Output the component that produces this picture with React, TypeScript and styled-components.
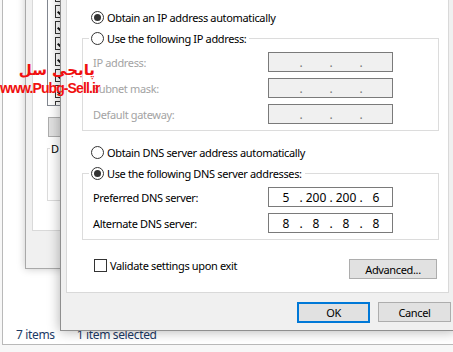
import styled, { createGlobalStyle } from "styled-components";

const GlobalStyle = createGlobalStyle`
  html, body { margin: 0; padding: 0; background: #f7f7f7; }
  body {
    font-family: "Noto Sans", "Liberation Sans", sans-serif;
    font-size: 11px;
    letter-spacing: -0.35px;
    color: #000;
  }
`;

const Desktop = styled.div`
  position: relative;
  width: 453px;
  height: 352px;
  overflow: hidden;
  background: #f7f7f7;
`;

/* explorer window at the back */
const Explorer = styled.div`
  position: absolute;
  left: 2px;
  top: -20px;
  width: 600px;
  height: 365px;
  box-sizing: border-box;
  background: #fff;
  border: 1px solid #b9b9b9;
  display: flex;
  flex-direction: column;
`;

const ExplorerBody = styled.div`
  flex: 1;
`;

const StatusBar = styled.div`
  height: 20px;
  display: flex;
  align-items: center;
  gap: 22px;
  padding-left: 13px;
  font-size: 12px;
  color: #1c3a66;
`;

/* network adapter properties behind */
const BackDialog = styled.div`
  position: absolute;
  left: 25px;
  top: -40px;
  width: 320px;
  height: 309px;
  box-sizing: border-box;
  background: #f0f0f0;
  border: 1px solid #a9a9a9;
  box-shadow: 0 0 8px rgba(0, 0, 0, 0.22);
  padding-left: 6px;
`;

const BackPanel = styled.div`
  height: 270px;
  box-sizing: border-box;
  background: #fff;
  border: 1px solid #d9d9d9;
  border-top: none;
  padding-left: 14px;
  display: flex;
  flex-direction: column;
  align-items: flex-start;
`;

const ItemList = styled.div`
  width: 240px;
  height: 145px;
  box-sizing: border-box;
  border: 1px solid #828790;
  border-top: none;
  padding: 10px 0 0 7px;
  overflow: hidden;
`;

const ListItem = styled.div`
  height: 16px;
  display: flex;
  align-items: center;
`;

const MiniCheck = styled.span`
  position: relative;
  width: 13px;
  height: 13px;
  box-sizing: border-box;
  border: 1px solid #333;

  &::after {
    content: "";
    position: absolute;
    left: 3px;
    top: 1px;
    width: 3px;
    height: 6px;
    border: solid #111;
    border-width: 0 2px 2px 0;
    transform: rotate(40deg);
  }
`;

const BackButton = styled.div`
  margin: 11px 0 0 1px;
  width: 80px;
  height: 20px;
  box-sizing: border-box;
  background: #e1e1e1;
  border: 1px solid #adadad;
`;

const DescGroup = styled.fieldset`
  margin: 4px 0 0 0;
  padding: 0 0 0 2px;
  width: 230px;
  height: 60px;
  box-sizing: border-box;
  border: 1px solid #dcdcdc;
  legend {
    padding: 0 1px;
  }
`;

/* IPv4 properties in front */
const FrontDialog = styled.div`
  position: absolute;
  left: 60px;
  top: -10px;
  width: 396px;
  height: 341px;
  box-sizing: border-box;
  background: #f0f0f0;
  border: 1px solid #8f8f8f;
  box-shadow: 0 0 12px rgba(0, 0, 0, 0.32);
  display: flex;
  flex-direction: column;
`;

const Panel = styled.div`
  flex: 1;
  margin: 0 6px 0 5px;
  padding-top: 15px;
  box-sizing: border-box;
  background: #fff;
  border: 1px solid #d9d9d9;
  display: flex;
  flex-direction: column;
`;

const RadioRow = styled.label<{ $top?: number }>`
  height: 20px;
  margin-top: ${p => p.$top ?? 0}px;
  padding-left: 24px;
  display: flex;
  align-items: center;
  gap: 3px;
`;

const RadioInline = styled.span`
  height: 20px;
  display: inline-flex;
  align-items: center;
  gap: 3px;
  color: #000;
`;

const Radio = styled.span<{ $on: boolean }>`
  width: 13px;
  height: 13px;
  box-sizing: border-box;
  flex-shrink: 0;
  border: 1px solid #333;
  border-radius: 50%;
  background: #fff;
  display: inline-flex;
  align-items: center;
  justify-content: center;

  &::after {
    content: "";
    display: ${p => (p.$on ? "block" : "none")};
    width: 7px;
    height: 7px;
    border-radius: 50%;
    background: #333;
  }
`;

const Group = styled.fieldset`
  margin: 1px 9px 0 15px;
  padding: 0 0 6px 6px;
  min-inline-size: auto;
  border: 1px solid #dcdcdc;

  legend {
    padding: 0 3px 0 2px;
  }
`;

const FieldGrid = styled.div`
  margin: 4px 0 0 4px;
  display: grid;
  grid-template-columns: 175px 125px;
  row-gap: 6px;
  align-items: center;
`;

const FieldLabel = styled.span<{ $off: boolean }>`
  color: ${p => (p.$off ? "#a3a3a3" : "#000")};
`;

const AddressBox = styled.div<{ $off: boolean }>`
  height: 20px;
  box-sizing: border-box;
  border: 1px solid #7a7a7a;
  background: ${p => (p.$off ? "#f0f0f0" : "#fff")};
  display: flex;
  align-items: center;
  padding-left: 4px;
  font-size: 12px;
  letter-spacing: 0;
  color: ${p => (p.$off ? "#7a7a7a" : "#000")};
`;

const Octet = styled.span`
  width: 26px;
  text-align: center;
`;

const Dot = styled.span`
  width: 4px;
  text-align: center;
`;

const BottomRow = styled.div`
  margin-top: 19px;
  padding: 0 11px 0 27px;
  display: flex;
  justify-content: space-between;
  align-items: flex-start;
`;

const CheckLabel = styled.label`
  display: flex;
  align-items: center;
  gap: 3px;
  height: 13px;
`;

const CheckBox = styled.span`
  width: 13px;
  height: 13px;
  box-sizing: border-box;
  border: 1px solid #333;
  background: #fff;
`;

const Button = styled.button<{ $w: number; $default?: boolean }>`
  width: ${p => p.$w}px;
  height: ${p => (p.$default ? 21 : 20)}px;
  box-sizing: border-box;
  padding: 0;
  background: #e1e1e1;
  border: ${p => (p.$default ? "2px solid #0078d7" : "1px solid #adadad")};
  font-family: inherit;
  font-size: inherit;
  letter-spacing: inherit;
  color: #000;
`;

const ButtonRow = styled.div`
  height: 37px;
  box-sizing: border-box;
  padding: 9px 4px 0 0;
  display: flex;
  justify-content: flex-end;
  gap: 8px;
`;

const Watermark = styled.div`
  position: absolute;
  left: 0;
  top: 63px;
  width: 99px;
  color: #f01010;
  font-weight: bold;
  text-align: right;
  line-height: 1;
  letter-spacing: 0;
`;

const WatermarkFa = styled.div`
  font-family: "DejaVu Sans", sans-serif;
  font-size: 15px;
  padding-right: 4px;
  direction: rtl;
`;

const WatermarkUrl = styled.div`
  margin-top: 3px;
  font-family: "Liberation Sans", sans-serif;
  font-size: 14px;
  letter-spacing: -0.9px;
  white-space: nowrap;
`;

type Field = { label: string; value?: number[] };

const ipFields: Field[] = [
  { label: "IP address:" },
  { label: "Subnet mask:" },
  { label: "Default gateway:" },
];

const dnsFields: Field[] = [
  { label: "Preferred DNS server:", value: [5, 200, 200, 6] },
  { label: "Alternate DNS server:", value: [8, 8, 8, 8] },
];

function Address({ value }: { value?: number[] }) {
  const parts = value ?? [null, null, null, null];
  return (
    <AddressBox $off={!value}>
      {parts.map((n, i) => (
        <span key={i} style={{ display: "contents" }}>
          {i > 0 && <Dot>.</Dot>}
          <Octet>{n ?? ""}</Octet>
        </span>
      ))}
    </AddressBox>
  );
}

function Fields({ fields }: { fields: Field[] }) {
  return (
    <FieldGrid>
      {fields.map(f => (
        <span key={f.label} style={{ display: "contents" }}>
          <FieldLabel $off={!f.value}>{f.label}</FieldLabel>
          <Address value={f.value} />
        </span>
      ))}
    </FieldGrid>
  );
}

export default function App() {
  return (
    <>
      <GlobalStyle />
      <Desktop>
        <Explorer>
          <ExplorerBody />
          <StatusBar>
            <span>7 items</span>
            <span>1 item selected</span>
          </StatusBar>
        </Explorer>

        <BackDialog>
          <BackPanel>
            <ItemList>
              {Array.from({ length: 9 }).map((_, i) => (
                <ListItem key={i}>
                  <MiniCheck />
                </ListItem>
              ))}
            </ItemList>
            <BackButton />
            <DescGroup>
              <legend>D</legend>
            </DescGroup>
          </BackPanel>
        </BackDialog>

        <FrontDialog>
          <Panel>
            <RadioRow>
              <Radio $on />
              Obtain an IP address automatically
            </RadioRow>
            <Group>
              <legend>
                <RadioInline>
                  <Radio $on={false} />
                  Use the following IP address:
                </RadioInline>
              </legend>
              <Fields fields={ipFields} />
            </Group>

            <RadioRow $top={11}>
              <Radio $on={false} />
              Obtain DNS server address automatically
            </RadioRow>
            <Group>
              <legend>
                <RadioInline>
                  <Radio $on />
                  Use the following DNS server addresses:
                </RadioInline>
              </legend>
              <Fields fields={dnsFields} />
            </Group>

            <BottomRow>
              <CheckLabel>
                <CheckBox />
                Validate settings upon exit
              </CheckLabel>
              <Button $w={88}>Advanced...</Button>
            </BottomRow>
          </Panel>
          <ButtonRow>
            <Button $w={73} $default>OK</Button>
            <Button $w={73}>Cancel</Button>
          </ButtonRow>
        </FrontDialog>

        <Watermark>
          <WatermarkFa>پابجی سل</WatermarkFa>
          <WatermarkUrl>www.Pubg-Sell.ir</WatermarkUrl>
        </Watermark>
      </Desktop>
    </>
  );
}
